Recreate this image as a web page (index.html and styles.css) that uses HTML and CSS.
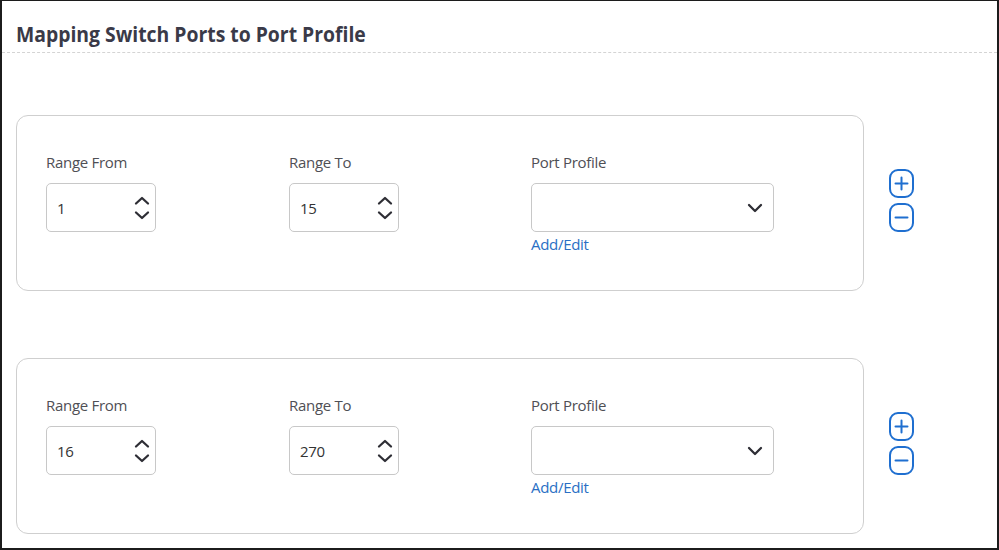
FILE: index.html
```html
<!DOCTYPE html>
<html>
<head>
<meta charset="utf-8">
<link rel="stylesheet" href="styles.css">
</head>
<body>
<div class="frame">
  <div class="header"><h1 class="title">Mapping Switch Ports to Port Profile</h1></div>
  <div class="rows">
    <div class="row">
      <div class="card">
        <div class="field">
          <div class="label">Range From</div>
          <div class="num"><span class="val">1</span>
            <svg class="spin" width="16" height="28" viewBox="0 0 16 28"><path d="M2 9.5 L8 4 L14 9.5" /><path d="M2 18.5 L8 24 L14 18.5" /></svg>
          </div>
        </div>
        <div class="field">
          <div class="label">Range To</div>
          <div class="num"><span class="val">15</span>
            <svg class="spin" width="16" height="28" viewBox="0 0 16 28"><path d="M2 9.5 L8 4 L14 9.5" /><path d="M2 18.5 L8 24 L14 18.5" /></svg>
          </div>
        </div>
        <div class="field">
          <div class="label">Port Profile</div>
          <div class="select">
            <svg class="caret" width="16" height="12" viewBox="0 0 16 12"><path d="M2 3 L8 9 L14 3" /></svg>
          </div>
          <a class="link" href="#">Add/Edit</a>
        </div>
      </div>
      <div class="actions">
        <svg class="btn" width="25" height="29" viewBox="0 0 25 29"><rect x="1" y="1" width="23" height="27" rx="8" /><path d="M12.5 8.5 V20.5 M6.5 14.5 H18.5" /></svg>
        <svg class="btn" width="25" height="29" viewBox="0 0 25 29"><rect x="1" y="1" width="23" height="27" rx="8" /><path d="M6.5 14.5 H18.5" /></svg>
      </div>
    </div>
    <div class="row">
      <div class="card">
        <div class="field">
          <div class="label">Range From</div>
          <div class="num"><span class="val">16</span>
            <svg class="spin" width="16" height="28" viewBox="0 0 16 28"><path d="M2 9.5 L8 4 L14 9.5" /><path d="M2 18.5 L8 24 L14 18.5" /></svg>
          </div>
        </div>
        <div class="field">
          <div class="label">Range To</div>
          <div class="num"><span class="val">270</span>
            <svg class="spin" width="16" height="28" viewBox="0 0 16 28"><path d="M2 9.5 L8 4 L14 9.5" /><path d="M2 18.5 L8 24 L14 18.5" /></svg>
          </div>
        </div>
        <div class="field">
          <div class="label">Port Profile</div>
          <div class="select">
            <svg class="caret" width="16" height="12" viewBox="0 0 16 12"><path d="M2 3 L8 9 L14 3" /></svg>
          </div>
          <a class="link" href="#">Add/Edit</a>
        </div>
      </div>
      <div class="actions">
        <svg class="btn" width="25" height="29" viewBox="0 0 25 29"><rect x="1" y="1" width="23" height="27" rx="8" /><path d="M12.5 8.5 V20.5 M6.5 14.5 H18.5" /></svg>
        <svg class="btn" width="25" height="29" viewBox="0 0 25 29"><rect x="1" y="1" width="23" height="27" rx="8" /><path d="M6.5 14.5 H18.5" /></svg>
      </div>
    </div>
  </div>
</div>
</body>
</html>
```

FILE: styles.css
```css
html, body {
  margin: 0;
  padding: 0;
  background: #fff;
}
body {
  font-family: "Open Sans", "Noto Sans", sans-serif;
  color: #333;
}
.frame {
  width: 999px;
  height: 550px;
  box-sizing: border-box;
  border: 2px solid #1c1c1c;
  border-top-width: 1px;
  overflow: hidden;
}
.header {
  height: 52px;
  box-sizing: border-box;
  border-bottom: 1px dashed #d4d4d4;
  padding: 0 0 4px 14px;
  display: flex;
  align-items: flex-end;
}
.title {
  margin: 0;
  font-size: 22px;
  line-height: 30px;
  font-weight: 700;
  color: #3a3a48;
  white-space: nowrap;
  transform: scaleX(0.88);
  transform-origin: left center;
}
.rows {
  display: flex;
  flex-direction: column;
  gap: 67px;
  padding-top: 62px;
}
.row {
  display: flex;
  align-items: center;
}
.card {
  width: 848px;
  height: 176px;
  box-sizing: border-box;
  margin-left: 14px;
  border: 1px solid #cfcfcf;
  border-radius: 12px;
  padding: 36px 0 0 29px;
  display: grid;
  grid-template-columns: 243px 242px 243px;
  align-items: start;
}
.field {
  display: flex;
  flex-direction: column;
  align-items: flex-start;
}
.label {
  font-size: 15px;
  line-height: 20px;
  color: #4f4f55;
  letter-spacing: -0.3px;
  margin-bottom: 11px;
}
.num {
  width: 110px;
  height: 49px;
  box-sizing: border-box;
  border: 1px solid #c8c8c8;
  border-radius: 5px;
  display: flex;
  align-items: center;
  justify-content: space-between;
  padding: 0 5px 0 10px;
}
.val {
  font-size: 15px;
  color: #333;
  letter-spacing: -0.3px;
}
.spin path, .caret path {
  fill: none;
  stroke: #2e2e35;
  stroke-width: 2.3;
  stroke-linecap: round;
  stroke-linejoin: round;
}
.select {
  width: 243px;
  height: 49px;
  box-sizing: border-box;
  border: 1px solid #c8c8c8;
  border-radius: 5px;
  display: flex;
  align-items: center;
  justify-content: flex-end;
  padding-right: 10px;
}
.link {
  margin-top: 2px;
  font-size: 15px;
  line-height: 20px;
  color: #2a6fc4;
  text-decoration: none;
  letter-spacing: -0.3px;
}
.actions {
  display: flex;
  flex-direction: column;
  gap: 5px;
  margin-left: 25px;
  margin-top: -6px;
}
.btn rect {
  fill: none;
  stroke: #1f6fd0;
  stroke-width: 2;
}
.btn path {
  fill: none;
  stroke: #1f6fd0;
  stroke-width: 2;
  stroke-linecap: round;
}
```
